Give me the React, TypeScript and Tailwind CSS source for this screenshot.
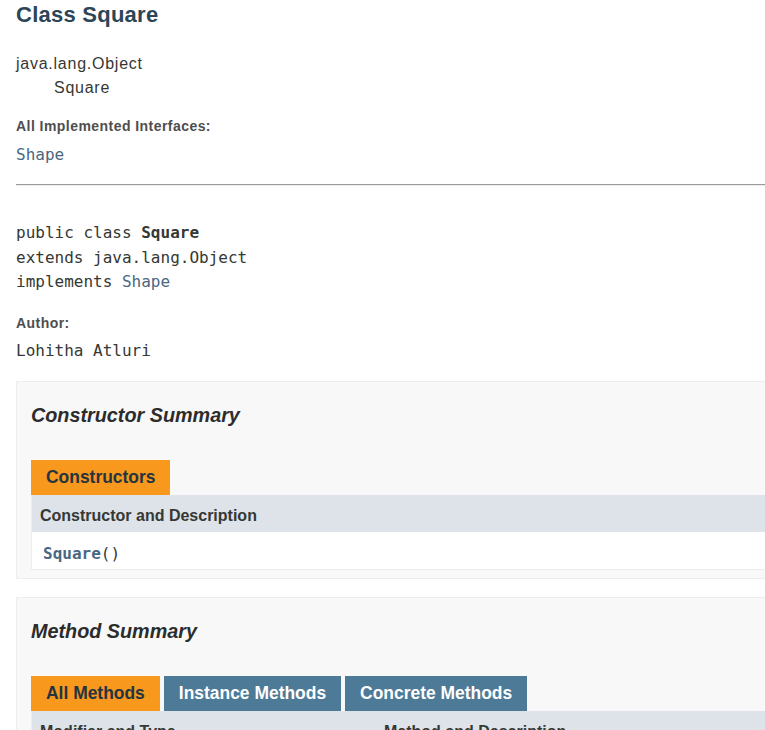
import React from "react";

const mono = "font-['DejaVu_Sans_Mono',monospace]";

function Tab({ label, active }: { label: string; active?: boolean }) {
  return (
    <div
      className={
        "h-[35px] px-[15px] flex items-center text-[17.45px] font-bold " +
        (active ? "bg-[#f8981d] text-[#253441]" : "bg-[#4d7a97] text-white")
      }
    >
      {label}
    </div>
  );
}

export default function App() {
  return (
    <div className="w-[765px] h-[730px] overflow-hidden bg-white font-['Liberation_Sans',Arial,sans-serif] text-[#353833]">
      <div className="w-[900px] pl-4">
        <h2 className="text-[22px] leading-[30px] font-bold text-[#2c4557] tracking-[0.25px]">Class Square</h2>

        <div className="mt-[22px] text-[16px] leading-6 tracking-[0.75px]">
          <div>java.lang.Object</div>
          <div className="pl-[38px]">Square</div>
        </div>

        <div className="mt-[16px] text-[14px] leading-5 font-bold text-[#4e4e4e] tracking-[0.45px]">
          All Implemented Interfaces:
        </div>
        <div className={"mt-[7px] text-[16px] leading-6 text-[#4a6782] " + mono}>Shape</div>

        <div className="mt-[17px] border-t border-[#9a9a9a] border-b border-b-[#eeeeee]" />

        <div className={"mt-[35px] text-[16px] leading-[24.5px] " + mono}>
          <div>
            public class <span className="font-bold">Square</span>
          </div>
          <div>extends java.lang.Object</div>
          <div>
            implements <span className="text-[#4a6782]">Shape</span>
          </div>
        </div>

        <div className="mt-[18px] text-[14px] leading-5 font-bold text-[#4e4e4e] tracking-[0.45px]">Author:</div>
        <div className={"mt-[6px] text-[16px] leading-6 " + mono}>Lohitha Atluri</div>

        {/* Constructor Summary */}
        <div className="mt-[18px] border border-[#ededed] bg-[#f8f8f8] pl-[14px] pt-[19px] pb-[8px]">
          <h3 className="text-[19.8px] leading-7 font-bold italic text-[#2c2c2c]">Constructor Summary</h3>
          <div className="mt-[31px] flex">
            <Tab label="Constructors" active />
          </div>
          <div className="border border-t-0 border-[#ededed]">
            <div className="h-[37px] bg-[#dee3e9] flex items-center pl-[8px] pt-[6px] text-[16px] font-bold">
              Constructor and Description
            </div>
            <div className={"h-[37px] bg-white flex items-center pl-[11px] pt-[7px] text-[16px] " + mono}>
              <span className="font-bold text-[#4a6782]">Square</span>()
            </div>
          </div>
        </div>

        {/* Method Summary */}
        <div className="mt-[18px] border border-[#ededed] bg-[#f8f8f8] pl-[14px] pt-[19px] pb-[7px]">
          <h3 className="text-[19.8px] leading-7 font-bold italic text-[#2c2c2c]">Method Summary</h3>
          <div className="mt-[31px] flex gap-1">
            <Tab label="All Methods" active />
            <Tab label="Instance Methods" />
            <Tab label="Concrete Methods" />
          </div>
          <div className="border border-t-0 border-[#ededed]">
            <div className="h-[37px] bg-[#dee3e9] flex items-center pt-[6px] text-[16px] font-bold">
              <div className="w-[343px] pl-[8px]">Modifier and Type</div>
              <div className="pl-[9px]">Method and Description</div>
            </div>
            <div className="h-[37px] bg-white" />
          </div>
        </div>
      </div>
    </div>
  );
}
